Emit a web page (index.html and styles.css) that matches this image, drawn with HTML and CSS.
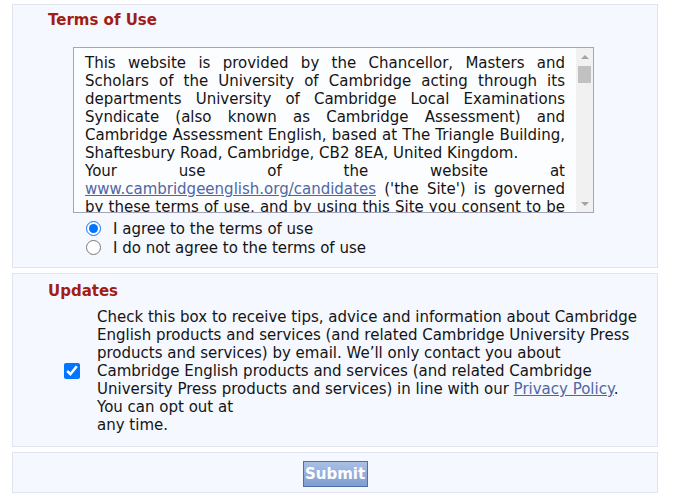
FILE: index.html
```html
<!DOCTYPE html>
<html lang="en">
<head>
    <meta charset="UTF-8">
    <meta name="viewport" content="width=device-width, initial-scale=1.0">
    <title>Cambridge English - Terms of Use</title>
    <link rel="stylesheet" href="styles.css">
</head>
<body>

    <form class="signup-form">

        <!-- Terms of use -->
        <fieldset class="panel terms-panel">
            <h3 class="panel-title">Terms of Use</h3>

            <div class="terms-box">
                <div class="terms-text">
                    This website is provided by the Chancellor, Masters and Scholars of the University of Cambridge acting through its departments University of Cambridge Local Examinations Syndicate (also known as Cambridge Assessment) and Cambridge Assessment English, based at The Triangle Building, Shaftesbury Road, Cambridge, CB2 8EA, United Kingdom.<br>
                    Your use of the website at <a href="#">www.cambridgeenglish.org/candidates</a> ('the Site') is governed by these terms of use, and by using this Site you consent to be bound by them. If you do not agree to these terms of use, please do not use the Site. We may change these terms of use at any time, so please check them each time you visit.
                </div>
                <!-- scrollbar drawn by hand so it shows the same everywhere -->
                <div class="scrollbar">
                    <span class="scroll-arrow up"></span>
                    <span class="scroll-thumb"></span>
                    <span class="scroll-track"></span>
                    <span class="scroll-arrow down"></span>
                </div>
            </div>

            <div class="radio-list">
                <label class="radio-row">
                    <input type="radio" name="terms" value="agree" checked>
                    <span>I agree to the terms of use</span>
                </label>
                <label class="radio-row">
                    <input type="radio" name="terms" value="disagree">
                    <span>I do not agree to the terms of use</span>
                </label>
            </div>
        </fieldset>

        <!-- Marketing updates -->
        <fieldset class="panel updates-panel">
            <h3 class="panel-title">Updates</h3>

            <label class="updates-row">
                <input type="checkbox" name="updates" checked>
                <span class="updates-text">
                    Check this box to receive tips, advice and information about Cambridge English products and services (and related Cambridge University Press products and services) by email. We’ll only contact you about Cambridge English products and services (and related Cambridge University Press products and services) in line with our <a href="#">Privacy Policy</a>.<br>
                    You can opt out at<br>
                    any time.
                </span>
            </label>
        </fieldset>

        <div class="panel submit-panel">
            <button type="submit" class="submit-button">Submit</button>
        </div>

    </form>

</body>
</html>
```

FILE: styles.css
```css
/* Page */
body {
    margin: 4px 17px 0 12px;
    background-color: #ffffff;
    font-family: "DejaVu Sans", Verdana, sans-serif;
    font-size: 15px;
    line-height: 18px;
    color: #141414;
}

a {
    color: #4f67a3;
}

/* Panels */
.panel {
    margin: 0 0 5px;
    padding: 0;
    border: 1px solid #dfe4ee;
    background-color: #f5f8ff;
    min-width: 0;
}

.panel-title {
    margin: 0;
    padding-left: 35px;
    font-size: 15px;
    line-height: 18px;
    font-weight: bold;
    color: #a21d14;
}

/* Terms */
.terms-panel {
    padding: 6px 0 10px;
}

.terms-box {
    display: flex;
    margin: 18px 0 0 60px;
    width: 519px;
    height: 164px;
    border: 1px solid #a4a6b8;
    background-color: #fcfdff;
}

.terms-text {
    flex: 1;
    overflow: hidden;
    padding: 6px 11px 6px 11px;
    text-align: justify;
}

.scrollbar {
    display: flex;
    flex-direction: column;
    align-items: center;
    width: 17px;
    background-color: #f1f1f1;
}

.scroll-arrow {
    display: flex;
    align-items: center;
    justify-content: center;
    width: 17px;
    height: 17px;
}

.scroll-arrow::before {
    content: "";
    border-left: 4px solid transparent;
    border-right: 4px solid transparent;
}

.scroll-arrow.up::before {
    border-bottom: 4px solid #a3a3a3;
}

.scroll-arrow.down::before {
    border-top: 4px solid #a3a3a3;
}

.scroll-thumb {
    width: 13px;
    height: 17px;
    margin-top: 1px;
    background-color: #c1c1c1;
}

.scroll-track {
    flex: 1;
}

.radio-list {
    display: flex;
    flex-direction: column;
    margin: 6px 0 0 73px;
}

.radio-row {
    display: flex;
    align-items: center;
    gap: 12px;
    height: 19px;
}

.radio-row input {
    flex: none;
    width: 15px;
    height: 15px;
    margin: 0;
}

/* Updates */
.updates-panel {
    padding: 8px 0 12px;
}

.updates-row {
    display: flex;
    align-items: center;
    gap: 17px;
    margin: 8px 0 0 51px;
}

.updates-row input {
    flex: none;
    width: 16px;
    height: 16px;
    margin: 0;
}

.updates-text {
    width: 546px;
}

/* Submit */
.submit-panel {
    display: flex;
    justify-content: center;
    padding: 8px 0 5px;
}

.submit-button {
    width: 65px;
    height: 26px;
    padding: 0;
    border: 1px solid #4f6fa8;
    background: linear-gradient(#a9bfe6, #7f9dd1);
    color: #ffffff;
    font-family: Tahoma, "DejaVu Sans", sans-serif;
    font-size: 15px;
    font-weight: bold;
    cursor: pointer;
}

.submit-button:hover {
    background: linear-gradient(#b8cbee, #8eaad8);
}
```
